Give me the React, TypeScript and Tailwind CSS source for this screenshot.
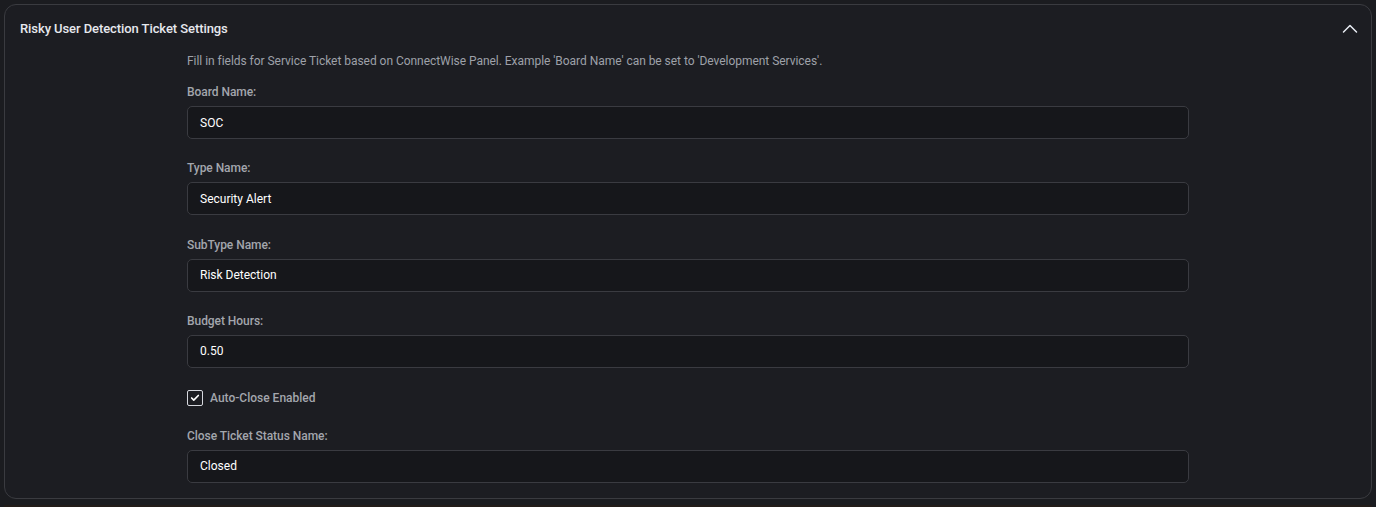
import { Check } from "lucide-react"

const fields = [
  { label: "Board Name:", value: "SOC" },
  { label: "Type Name:", value: "Security Alert" },
  { label: "SubType Name:", value: "Risk Detection" },
  { label: "Budget Hours:", value: "0.50" },
]

function Field({ label, value }: { label: string; value: string }) {
  return (
    <div className="flex flex-col gap-[6px]">
      <label className="text-[12px] leading-4 font-medium tracking-[-0.05px] text-[#a3a6ad]">{label}</label>
      <div className="flex h-[33px] items-center rounded-[5px] border border-[#3a3b41] bg-[#16171b] px-3 text-[12px] font-normal text-white">
        {value}
      </div>
    </div>
  )
}

export default function App() {
  return (
    <div
      className="flex h-[507px] flex-col bg-[#1b1c20] p-1 pb-0"
      style={{ fontFamily: "Roboto, 'Liberation Sans', sans-serif" }}
    >
      <div className="h-[495px] rounded-xl border border-[#3a3b40] bg-[#1c1d22]">
        <div className="flex h-[48px] items-center justify-between pl-[15px] pr-[13px]">
          <h2 className="text-[13px] font-medium tracking-[-0.08px] text-[#e6e8ee]">Risky User Detection Ticket Settings</h2>
          <svg width="16" height="16" viewBox="0 0 16 16" fill="none" stroke="#e8ecf4" strokeWidth="1.5" strokeLinecap="round" strokeLinejoin="round">
            <polyline points="1.5,11 8,4.5 14.5,11" />
          </svg>
        </div>

        <div className="mx-auto w-[1002px]">
          <p className="text-[12px] leading-4 tracking-[-0.04px] text-[#9ea1a9]">
            Fill in fields for Service Ticket based on ConnectWise Panel. Example 'Board Name' can be set to 'Development Services'.
          </p>
          <div className="mt-[15px] flex flex-col gap-[21.33px]">
            {fields.map((f) => (
              <Field key={f.label} label={f.label} value={f.value} />
            ))}
            <div className="flex h-[17px] items-center gap-[7px]">
              <span className="flex h-4 w-4 items-center justify-center rounded-[2px] border border-[#d6d8de] bg-[#1c1d22]">
                <Check className="h-[10px] w-[10px] text-white" strokeWidth={4} />
              </span>
              <span className="text-[12px] font-medium text-[#a3a6ad]">Auto-Close Enabled</span>
            </div>
            <Field label="Close Ticket Status Name:" value="Closed" />
          </div>
        </div>
      </div>
      <div className="mt-auto h-[2px] bg-[#221c19]" />
    </div>
  )
}
